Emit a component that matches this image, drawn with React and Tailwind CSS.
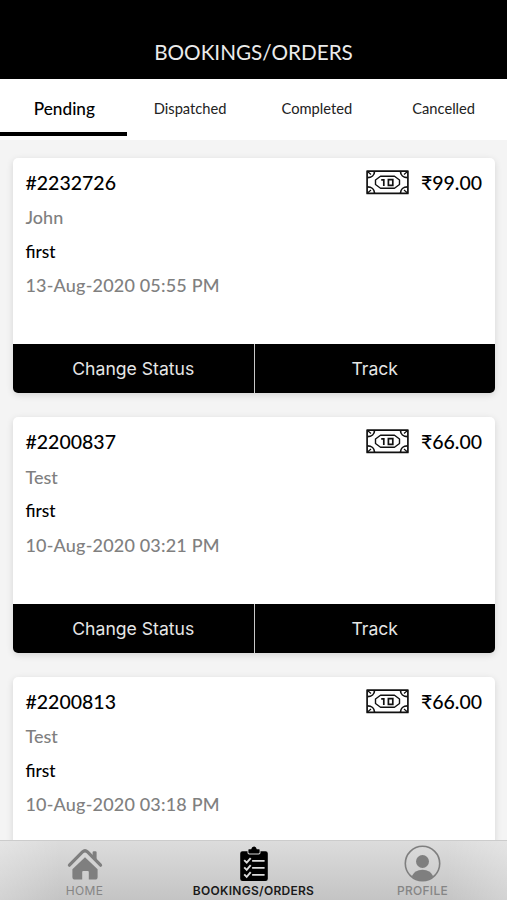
const lato = "font-['Lato','Noto_Sans',sans-serif]";
const inter = "font-['Inter',sans-serif]";

const orders = [
  { id: '#2232726', name: 'John', item: 'first', date: '13-Aug-2020 05:55 PM', price: '99.00', actions: true },
  { id: '#2200837', name: 'Test', item: 'first', date: '10-Aug-2020 03:21 PM', price: '66.00', actions: true },
  { id: '#2200813', name: 'Test', item: 'first', date: '10-Aug-2020 03:18 PM', price: '66.00', actions: false },
];

function CashIcon() {
  return (
    <svg viewBox="0 0 43 25" className="h-[25px] w-[43px]" fill="none" stroke="#111" strokeWidth="1.7" strokeLinejoin="round">
      <rect x="1.1" y="1.1" width="40.8" height="22.3" />
      <path d="M8.5 1.4c0 3.8-3 6.300-7 6.300M34.500 1.400c0 3.800 3 6.300 7 6.300M8.500 23.100c0-3.800-3-6.300-7-6.300M34.500 23.100c0-3.800 3-6.300 7-6.300" />
      <path d="M1.5 1.5l3.500 3M41.500 1.500l-3.500 3M1.500 23l3.500-3M41.500 23l-3.500-3" strokeWidth="1.2" />
      <path d="M14.500 6.200h14l5 3.800v4.500l-5 3.800h-14l-5-3.800V10z" strokeWidth="1.4" />
      <path d="M15.200 9.800h2.300M17.800 9v7M22.400 9.600h4.400v5.700h-4.400z" strokeWidth="1.700" strokeLinejoin="miter" />
    </svg>
  );
}

function HomeIcon() {
  return (
    <svg viewBox="0 0 36 36" className="h-9 w-9" fill="#7f7f7f">
      <path d="M2.4 19.2L15.5 5.9q2.500-2.300 5 0L33.600 19.200" fill="none" stroke="#7f7f7f" strokeWidth="3.200" strokeLinecap="round" strokeLinejoin="round" />
      <path d="M25.600 6.400q0-1.200 1.200-1.200h1.600q1.200 0 1.200 1.200v9l-4-4z" />
      <path d="M18 11.200L30.600 23.300V31q0 2.600-2.600 2.600h-6.200V26q0-1-1-1h-4.600q-1 0-1 1v7.600H8.200Q5.400 33.600 5.400 31v-7.700z" />
    </svg>
  );
}

function OrdersIcon() {
  return (
    <svg viewBox="0 0 30 36" className="h-9 w-[30px]">
      <path d="M3.500 5.200h5v1.500q0 1.800 1.800 1.800h9.400q1.800 0 1.800-1.800V5.200h5q2.300 0 2.300 2.300v25.200q0 2.300-2.300 2.300h-23q-2.300 0-2.300-2.300V7.500q0-2.300 2.300-2.300z" />
      <path d="M10 3.200h2.200Q12.800.500 15 .500t2.800 2.700H20q.6 0 .6.600v2.400q0 1.200-1.200 1.200h-8.800q-1.200 0-1.200-1.200V3.800q0-.6.600-.6z" />
      <path d="M5.200 14.200l2.500 2.500 4-4.600M5.200 21.300l2.500 2.500 4-4.600M5.200 28.300l2.500 2.500 4-4.600" fill="none" stroke="#dcdcdc" strokeWidth="1.900" />
      <path d="M13.700 14.900h11.300M13.700 21.900h11.300M13.700 28.900h11.300" stroke="#dcdcdc" strokeWidth="1.600" strokeLinecap="round" />
    </svg>
  );
}

function ProfileIcon() {
  return (
    <svg viewBox="0 0 37 37" className="h-[37px] w-[37px]" fill="#7f7f7f">
      <circle cx="18.500" cy="18.500" r="17.200" fill="none" stroke="#7f7f7f" strokeWidth="1.600" />
      <circle cx="18.500" cy="16.500" r="6.500" />
      <path d="M7.800 31.300Q10.500 24.800 18.500 24.800T29.200 31.300Q25 35.600 18.500 35.600T7.800 31.300z" />
    </svg>
  );
}

function OrderCard({ order }) {
  return (
    <article className="flex h-[235.5px] shrink-0 flex-col overflow-hidden rounded-[5px] bg-white shadow-[0_2px_7px_rgba(0,0,0,0.13)]">
      <div className="flex flex-1 flex-col pl-[12.5px] pr-[13px] pt-[7.6px]">
        <div className="mb-[1.2px] flex h-[34px] items-center justify-between text-[19.5px] font-medium text-black">
          <span>{order.id}</span>
          <div className="flex items-center gap-3">
            <CashIcon />
            <span>₹{order.price}</span>
          </div>
        </div>
        <div className="flex h-[34px] items-center text-[18px] font-medium text-[#808080]">{order.name}</div>
        <div className="flex h-[34px] items-center text-[17.3px] font-medium text-black">{order.item}</div>
        <div className="flex h-[34px] items-center text-[18px] font-medium tracking-[0.18px] text-[#808080]">{order.date}</div>
      </div>
      {order.actions && (
        <div className={`flex h-[49px] bg-black text-[17.6px] text-[#e6e6e6] ${inter}`}>
          <div className="flex flex-1 items-center justify-center pt-[1.5px]">Change Status</div>
          <div className="flex flex-1 items-center justify-center border-l border-[#c8c8c8] pt-[1.5px]">Track</div>
        </div>
      )}
    </article>
  );
}

export default function App() {
  return (
    <div className={`flex h-[900px] w-[507px] flex-col overflow-hidden bg-[#f4f4f4] ${lato}`}>
      <header className="flex h-[79px] shrink-0 items-end justify-center bg-black pb-[11px] text-[20.7px] text-[#ebebeb]">
        BOOKINGS/ORDERS
      </header>
      <nav className="grid h-[61px] shrink-0 grid-cols-4 bg-white text-[14.7px] text-[#222]">
        <div className="flex h-[57px] items-center justify-center border-b-4 border-black pt-[7px] pl-[2px] text-[17.2px] font-medium text-black">Pending</div>
        <div className="flex h-[57px] items-center justify-center pt-[2px]">Dispatched</div>
        <div className="flex h-[57px] items-center justify-center pt-[2px]">Completed</div>
        <div className="flex h-[57px] items-center justify-center pt-[2px]">Cancelled</div>
      </nav>
      <main className="flex min-h-0 flex-1 flex-col gap-6 overflow-hidden pl-[13px] pr-[12px] pt-[17.8px]">
        {orders.map((o) => (
          <OrderCard key={o.id} order={o} />
        ))}
      </main>
      <footer className={`h-[60px] shrink-0 border-t border-[#cccccc] bg-linear-to-b from-[#dcdcdc] to-[#c4c4c4] text-[12px] leading-[14px] text-[#858585] ${inter}`}>
        <div className="grid h-full grid-cols-3 bg-[linear-gradient(to_right,rgba(255,255,255,0.25),transparent_12%,transparent_88%,rgba(255,255,255,0.25))]">
          <div className="flex flex-col items-center pt-[5px]">
            <HomeIcon />
            <span className="mt-[2px] tracking-[0.3px]">HOME</span>
          </div>
          <div className="flex flex-col items-center pt-[5px] font-semibold text-[#1a1a1a]">
            <OrdersIcon />
            <span className="mt-[2px] tracking-[0.28px]">BOOKINGS/ORDERS</span>
          </div>
          <div className="flex flex-col items-center pt-1 font-medium">
            <ProfileIcon />
            <span className="mt-[2px] tracking-[0.3px]">PROFILE</span>
          </div>
        </div>
      </footer>
    </div>
  );
}
